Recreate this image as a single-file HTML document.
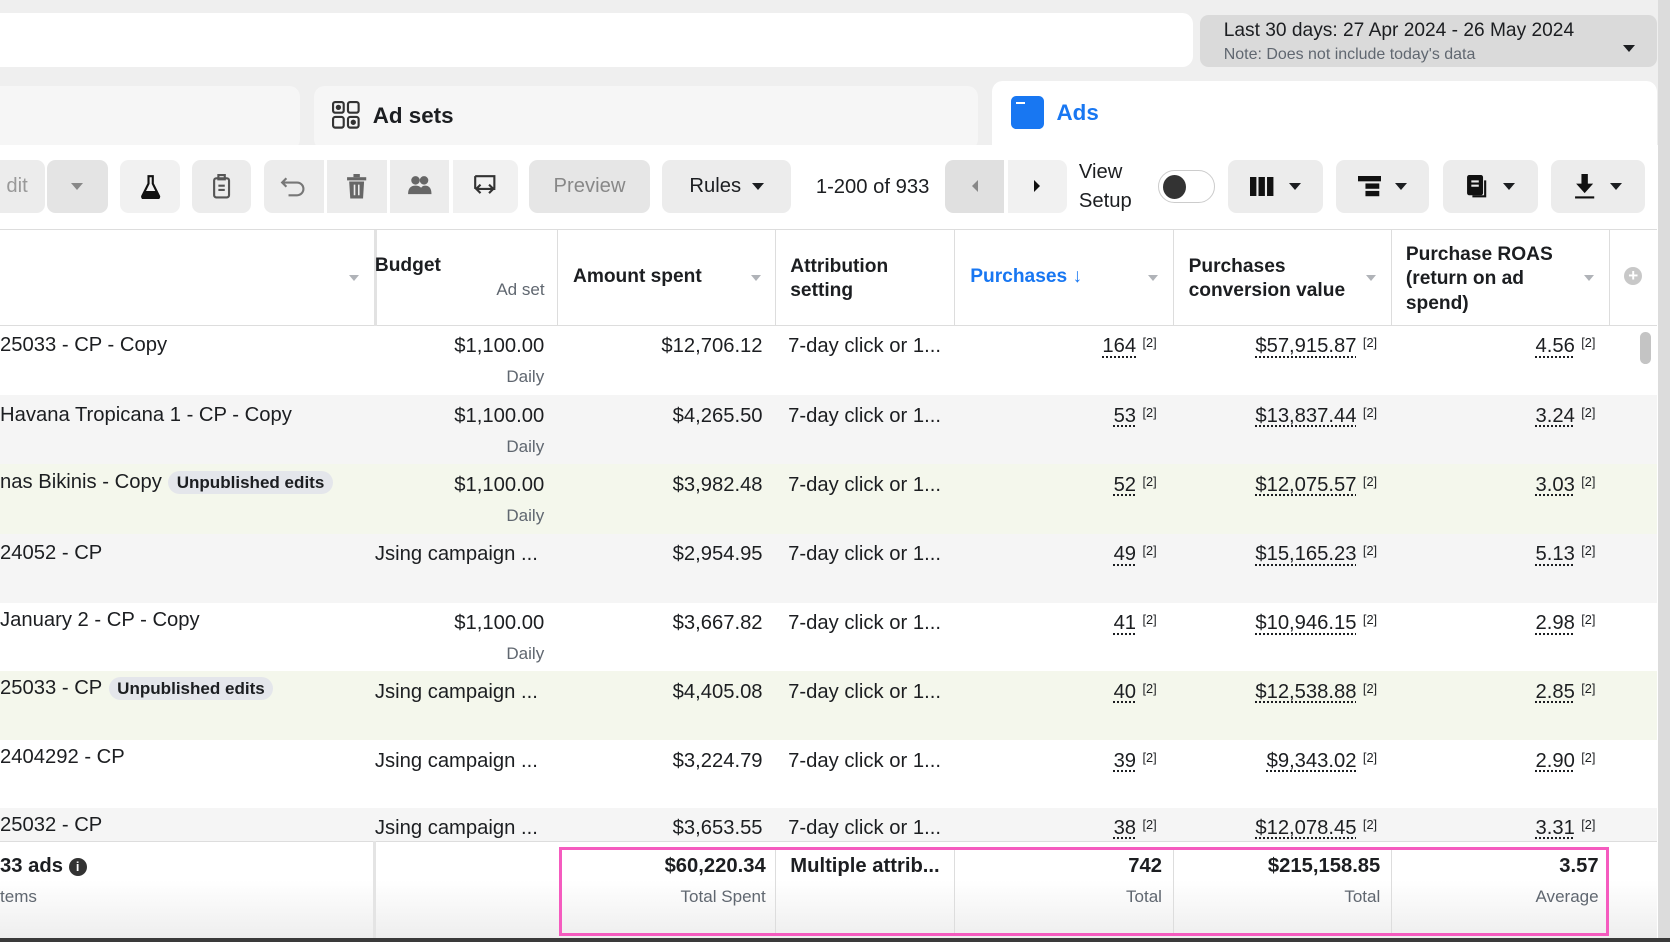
<!DOCTYPE html>
<html><head><meta charset="utf-8"><style>
*{box-sizing:border-box;margin:0;padding:0}
html,body{width:1670px;height:942px;overflow:hidden;background:#3a3a3a}
#w{zoom:1.06505;width:1568px;height:884px;position:relative;background:#efefef;font-family:"Liberation Sans",sans-serif;color:#1c1e21;overflow:hidden}
.a{position:absolute}
.btn{position:absolute;top:150px;height:50px;background:#ececec;border-radius:8px;display:flex;align-items:center;justify-content:center;color:#444}
.tri{width:0;height:0;border-left:6px solid transparent;border-right:6px solid transparent;border-top:7px solid #1c1e21;display:inline-block}
.row{position:absolute;left:0;width:1556px;height:65px;font-size:19px}
.r{position:absolute;top:9px;text-align:right;white-space:nowrap}
.u{text-decoration:underline dotted;text-underline-offset:4px}
.sup{font-size:12px;vertical-align:top;margin-left:6px}
.daily{position:absolute;top:39px;right:10px;font-size:16px;color:#606770}
.badge{background:#e4e6eb;border-radius:12px;font-size:16px;font-weight:bold;padding:2px 8px;margin-left:6px}
.hd{font-size:18px;font-weight:bold;position:absolute}
.dd{position:absolute;top:42px;width:0;height:0;border-left:5px solid transparent;border-right:5px solid transparent;border-top:6px solid #b0b3b8}
</style></head><body><div id="w">
<div class="a" style="left:-10px;top:12px;width:1130px;height:51px;background:#fff;border-radius:10px"></div>
<div class="a" style="left:1127px;top:14px;width:429px;height:49px;background:#dadada;border-radius:8px"></div>
<div class="a" style="left:1149px;top:19px;font-size:18px;color:#1c1e21">Last 30 days: 27 Apr 2024 - 26 May 2024</div>
<div class="a" style="left:1149px;top:43px;font-size:15px;color:#606770">Note: Does not include today's data</div>
<div class="a" style="left:1524px;top:35px"><span class="tri"></span></div>
<div class="a" style="left:1557px;top:0;width:11px;height:884px;background:#dcdcdc"></div>
<div class="a" style="left:-10px;top:81px;width:292px;height:60px;background:#f6f6f6;border-radius:10px"></div>
<div class="a" style="left:295px;top:81px;width:623px;height:60px;background:#f6f6f6;border-radius:10px"></div>
<svg class="a" style="left:312px;top:95px" width="26" height="26" viewBox="0 0 26 26" fill="none" stroke="#333" stroke-width="2"><rect x="1" y="1" width="10" height="10" rx="2"/><rect x="15" y="1" width="10" height="10" rx="2"/><rect x="1" y="15" width="10" height="10" rx="2"/><rect x="15" y="15" width="10" height="10" rx="2"/><circle cx="6" cy="6" r="1.5" fill="#333"/><circle cx="20" cy="20" r="1.5" fill="#333"/></svg>
<div class="a" style="left:350px;top:97px;font-size:21px;font-weight:bold">Ad sets</div>
<div class="a" style="left:931px;top:76px;width:625px;height:70px;background:#fff;border-radius:10px 10px 0 0"></div>
<div class="a" style="left:949px;top:90px;width:31px;height:31px;background:#1877f2;border-radius:5px"><div style="margin:6px 0 0 5px;width:8px;height:2px;background:#fff"></div></div>
<div class="a" style="left:992px;top:94px;font-size:21px;font-weight:bold;color:#1877f2">Ads</div>
<div class="a" style="left:0;top:136px;width:1557px;height:748px;background:#fff"></div>
<div class="btn" style="left:-10px;width:52px;color:#999;font-size:19px">dit</div>
<div class="btn" style="left:44px;width:57px;background:#e4e4e4"><span class="tri" style="border-top-color:#888"></span></div>
<div class="btn" style="left:113px;width:56px;background:#f1f1f1"><svg width="20" height="24" viewBox="0 0 20 24"><path d="M7 2h6M8 2v7L2 21q0 2 2 2h12q2 0 2-2L12 9V2" fill="none" stroke="#111" stroke-width="2"/><path d="M4 16h12l2 5q0 2-2 2H4q-2 0-2-2z" fill="#111"/></svg></div>
<div class="btn" style="left:180px;width:56px"><svg width="18" height="24" viewBox="0 0 18 24" fill="none" stroke="#555" stroke-width="2"><rect x="2" y="4" width="14" height="18" rx="2"/><rect x="6" y="1" width="6" height="4"/><path d="M6 11h6M6 15h6"/></svg></div>
<div class="btn" style="left:248px;width:56px;border-radius:8px 0 0 8px"><svg width="26" height="24" viewBox="0 0 26 24" fill="none" stroke="#777" stroke-width="2"><path d="M6 4L2 8l4 4M2 8h14a6 6 0 010 12H8"/></svg></div>
<div class="btn" style="left:307px;width:56px;border-radius:0"><svg width="20" height="24" viewBox="0 0 20 24" fill="#666"><rect x="1" y="3" width="18" height="3"/><rect x="7" y="0" width="6" height="3"/><path d="M3 7h14l-1 16H4z"/><path d="M8 10v10M12 10v10" stroke="#ececec" stroke-width="1.5"/></svg></div>
<div class="btn" style="left:366px;width:56px;border-radius:0"><svg width="24" height="22" viewBox="0 0 24 22" fill="#666"><circle cx="8" cy="5" r="4"/><circle cx="16" cy="5" r="4"/><path d="M1 18q0-8 7-8t7 8zM12 18q0-8 5-8 6 0 6 8z"/></svg></div>
<div class="btn" style="left:425px;width:61px;background:#f1f1f1;border-radius:0 8px 8px 0"><svg width="24" height="24" viewBox="0 0 24 24" fill="none" stroke="#333" stroke-width="2"><path d="M3 2h18v12M3 2v12M8 10l-4 4 4 4M4 14h16l-4-4M16 18l4-4"/></svg></div>
<div class="btn" style="left:497px;width:113px;background:#e6e6e6;color:#888;font-size:19px">Preview</div>
<div class="btn" style="left:622px;width:121px;color:#1c1e21;font-size:19px">Rules&nbsp;&nbsp;<span class="tri"></span></div>
<div class="a" style="left:766px;top:165px;font-size:19px">1-200 of 933</div>
<div class="btn" style="left:887px;width:56px;background:#e0e0e0;border-radius:8px 0 0 8px"><span style="width:0;height:0;border-top:6px solid transparent;border-bottom:6px solid transparent;border-right:6px solid #888"></span></div>
<div class="btn" style="left:946px;width:56px;background:#f1f1f1;border-radius:0 8px 8px 0"><span style="width:0;height:0;border-top:6px solid transparent;border-bottom:6px solid transparent;border-left:6px solid #111"></span></div>
<div class="a" style="left:1013px;top:148px;font-size:19px;line-height:28px">View<br>Setup</div>
<div class="a" style="left:1087px;top:160px;width:54px;height:31px;border:1px solid #ccc;border-radius:16px;background:#fff"><div style="margin:3px 0 0 4px;width:22px;height:23px;border-radius:50%;background:#333"></div></div>
<div class="btn" style="left:1153px;width:89px"><svg width="24" height="18" viewBox="0 0 24 18" fill="#111"><rect x="0" y="0" width="6" height="18"/><rect x="8" y="0" width="6" height="18"/><rect x="16" y="0" width="6" height="18"/></svg>&nbsp;&nbsp;&nbsp;<span class="tri"></span></div>
<div class="btn" style="left:1254px;width:88px"><svg width="22" height="20" viewBox="0 0 22 20" fill="#111"><rect x="0" y="0" width="22" height="5"/><rect x="7" y="7" width="13" height="5"/><rect x="7" y="14" width="13" height="5"/></svg>&nbsp;&nbsp;&nbsp;<span class="tri"></span></div>
<div class="btn" style="left:1355px;width:89px"><svg width="22" height="22" viewBox="0 0 22 22" fill="none" stroke="#111" stroke-width="2"><rect x="2" y="1" width="13" height="17" rx="1" fill="#111"/><path d="M18 5v15H6" /><path d="M5 6h7M5 10h7" stroke="#ececec"/></svg>&nbsp;&nbsp;&nbsp;<span class="tri"></span></div>
<div class="btn" style="left:1456px;width:89px"><svg width="20" height="24" viewBox="0 0 20 24" fill="#111"><rect x="7" y="0" width="6" height="10"/><path d="M2 9h16l-8 9z"/><rect x="1" y="21" width="18" height="2"/></svg>&nbsp;&nbsp;&nbsp;<span class="tri"></span></div>
<div class="a" style="left:0;top:215px;width:1556px;height:91px;border-top:1px solid #ddd;border-bottom:1px solid #ddd;background:#fff"></div>
<div class="a" style="left:351px;top:216px;width:3px;height:574px;background:#e2e2e2"></div>
<div class="a" style="left:523px;top:216px;width:1px;height:574px;background:#ddd"></div>
<div class="a" style="left:728px;top:216px;width:1px;height:574px;background:#ddd"></div>
<div class="a" style="left:896px;top:216px;width:1px;height:574px;background:#ddd"></div>
<div class="a" style="left:1101px;top:216px;width:1px;height:574px;background:#ddd"></div>
<div class="a" style="left:1306px;top:216px;width:1px;height:574px;background:#ddd"></div>
<div class="a" style="left:1511px;top:216px;width:1px;height:574px;background:#ddd"></div>
<div class="dd" style="left:328px;top:258px"></div>
<div class="hd" style="left:352px;top:239px">Budget</div>
<div class="a" style="left:466px;top:263px;font-size:16px;color:#606770">Ad set</div>
<div class="hd" style="left:538px;top:250px">Amount spent</div><div class="dd" style="left:705px;top:258px"></div>
<div class="hd" style="left:742px;top:239px;line-height:23px">Attribution<br>setting</div>
<div class="hd" style="left:911px;top:250px;color:#1877f2">Purchases ↓</div><div class="dd" style="left:1078px;top:258px"></div>
<div class="hd" style="left:1116px;top:239px;line-height:23px">Purchases<br>conversion value</div><div class="dd" style="left:1283px;top:258px"></div>
<div class="hd" style="left:1320px;top:228px;line-height:23px">Purchase ROAS<br>(return on ad<br>spend)</div><div class="dd" style="left:1487px;top:258px"></div>
<div class="a" style="left:1525px;top:251px;width:17px;height:17px;border-radius:50%;background:#c8c8c8;color:#fff;font-size:16px;line-height:17px;text-align:center;font-weight:bold">+</div>
<div class="row" style="top:306px;background:#fff"><div class="a" style="left:0;top:8px">25033 - CP - Copy</div><div class="r" style="right:1045px">$1,100.00</div><div class="daily" style="right:1045px">Daily</div><div class="r" style="right:840px">$12,706.12</div><div class="a" style="left:740px;top:9px">7-day click or 1...</div><div class="r" style="right:470px"><span class="u">164</span><span class="sup">[2]</span></div><div class="r" style="right:263px"><span class="u">$57,915.87</span><span class="sup">[2]</span></div><div class="r" style="right:58px"><span class="u">4.56</span><span class="sup">[2]</span></div></div>
<div class="row" style="top:371px;background:#f5f5f5"><div class="a" style="left:0;top:8px">Havana Tropicana 1 - CP - Copy</div><div class="r" style="right:1045px">$1,100.00</div><div class="daily" style="right:1045px">Daily</div><div class="r" style="right:840px">$4,265.50</div><div class="a" style="left:740px;top:9px">7-day click or 1...</div><div class="r" style="right:470px"><span class="u">53</span><span class="sup">[2]</span></div><div class="r" style="right:263px"><span class="u">$13,837.44</span><span class="sup">[2]</span></div><div class="r" style="right:58px"><span class="u">3.24</span><span class="sup">[2]</span></div></div>
<div class="row" style="top:436px;background:#f4f7ec"><div class="a" style="left:0;top:6px">nas Bikinis - Copy<span class="badge">Unpublished edits</span></div><div class="r" style="right:1045px">$1,100.00</div><div class="daily" style="right:1045px">Daily</div><div class="r" style="right:840px">$3,982.48</div><div class="a" style="left:740px;top:9px">7-day click or 1...</div><div class="r" style="right:470px"><span class="u">52</span><span class="sup">[2]</span></div><div class="r" style="right:263px"><span class="u">$12,075.57</span><span class="sup">[2]</span></div><div class="r" style="right:58px"><span class="u">3.03</span><span class="sup">[2]</span></div></div>
<div class="row" style="top:501px;background:#f5f5f5"><div class="a" style="left:0;top:8px">24052 - CP</div><div class="a" style="left:352px;top:9px">Jsing campaign ...</div><div class="r" style="right:840px">$2,954.95</div><div class="a" style="left:740px;top:9px">7-day click or 1...</div><div class="r" style="right:470px"><span class="u">49</span><span class="sup">[2]</span></div><div class="r" style="right:263px"><span class="u">$15,165.23</span><span class="sup">[2]</span></div><div class="r" style="right:58px"><span class="u">5.13</span><span class="sup">[2]</span></div></div>
<div class="row" style="top:566px;background:#fff"><div class="a" style="left:0;top:6px">January 2 - CP - Copy</div><div class="r" style="right:1045px">$1,100.00</div><div class="daily" style="right:1045px">Daily</div><div class="r" style="right:840px">$3,667.82</div><div class="a" style="left:740px;top:9px">7-day click or 1...</div><div class="r" style="right:470px"><span class="u">41</span><span class="sup">[2]</span></div><div class="r" style="right:263px"><span class="u">$10,946.15</span><span class="sup">[2]</span></div><div class="r" style="right:58px"><span class="u">2.98</span><span class="sup">[2]</span></div></div>
<div class="row" style="top:630px;background:#f4f7ec"><div class="a" style="left:0;top:6px">25033 - CP<span class="badge">Unpublished edits</span></div><div class="a" style="left:352px;top:9px">Jsing campaign ...</div><div class="r" style="right:840px">$4,405.08</div><div class="a" style="left:740px;top:9px">7-day click or 1...</div><div class="r" style="right:470px"><span class="u">40</span><span class="sup">[2]</span></div><div class="r" style="right:263px"><span class="u">$12,538.88</span><span class="sup">[2]</span></div><div class="r" style="right:58px"><span class="u">2.85</span><span class="sup">[2]</span></div></div>
<div class="row" style="top:695px;background:#fff"><div class="a" style="left:0;top:5px">2404292 - CP</div><div class="a" style="left:352px;top:9px">Jsing campaign ...</div><div class="r" style="right:840px">$3,224.79</div><div class="a" style="left:740px;top:9px">7-day click or 1...</div><div class="r" style="right:470px"><span class="u">39</span><span class="sup">[2]</span></div><div class="r" style="right:263px"><span class="u">$9,343.02</span><span class="sup">[2]</span></div><div class="r" style="right:58px"><span class="u">2.90</span><span class="sup">[2]</span></div></div>
<div class="row" style="top:759px;height:32px;background:#f5f5f5;overflow:hidden"><div class="a" style="left:0;top:5px">25032 - CP</div><div class="a" style="left:352px;top:8px">Jsing campaign ...</div><div class="r" style="right:840px;top:8px">$3,653.55</div><div class="a" style="left:740px;top:8px">7-day click or 1...</div><div class="r" style="right:470px;top:8px"><span class="u">38</span><span class="sup">[2]</span></div><div class="r" style="right:263px;top:8px"><span class="u">$12,078.45</span><span class="sup">[2]</span></div><div class="r" style="right:58px;top:8px"><span class="u">3.31</span><span class="sup">[2]</span></div></div>
<div class="a" style="left:1540px;top:312px;width:10px;height:30px;border-radius:5px;background:#c4c4c4"></div>
<div class="a" style="left:0;top:790px;width:1556px;height:91px;background:linear-gradient(#fff 40%,#eee);border-top:1px solid #ddd"></div>
<div class="a" style="left:350px;top:790px;width:3px;height:91px;background:#e4e4e4"></div>
<div class="a" style="left:0;top:803px;font-size:19px;font-weight:bold">33 ads <span style="display:inline-block;width:17px;height:17px;border-radius:50%;background:#333;color:#fff;font-size:12px;text-align:center;line-height:17px;vertical-align:1px">i</span></div>
<div class="a" style="left:0;top:833px;font-size:16px;color:#606770">tems</div>
<div class="a" style="left:525px;top:795px;width:986px;height:84px;border:3px solid #f55bbf"></div>
<div class="a" style="left:728px;top:798px;width:1px;height:78px;background:#ddd"></div>
<div class="a" style="left:896px;top:798px;width:1px;height:78px;background:#ddd"></div>
<div class="a" style="left:1101px;top:798px;width:1px;height:78px;background:#ddd"></div>
<div class="a" style="left:1306px;top:798px;width:1px;height:78px;background:#ddd"></div>
<div class="a" style="right:849px;top:803px;font-size:19px;font-weight:bold">$60,220.34</div>
<div class="a" style="right:849px;top:833px;font-size:16px;color:#606770">Total Spent</div>
<div class="a" style="left:742px;top:803px;font-size:19px;font-weight:bold">Multiple attrib...</div>
<div class="a" style="right:477px;top:803px;font-size:19px;font-weight:bold">742</div>
<div class="a" style="right:477px;top:833px;font-size:16px;color:#606770">Total</div>
<div class="a" style="right:272px;top:803px;font-size:19px;font-weight:bold">$215,158.85</div>
<div class="a" style="right:272px;top:833px;font-size:16px;color:#606770">Total</div>
<div class="a" style="right:67px;top:803px;font-size:19px;font-weight:bold">3.57</div>
<div class="a" style="right:67px;top:833px;font-size:16px;color:#606770">Average</div>
<div class="a" style="left:0;top:881px;width:1568px;height:4px;background:#3a3a3a"></div>
</div></body></html>
